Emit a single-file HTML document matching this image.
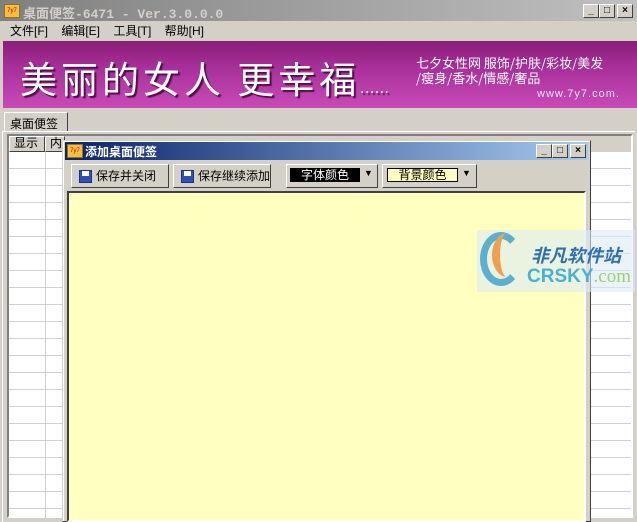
<!DOCTYPE html>
<html><head><meta charset="utf-8"><style>
*{margin:0;padding:0;box-sizing:border-box}
body{width:637px;height:522px;overflow:hidden;background:#d4d0c8;font-family:"Liberation Sans","Noto Sans CJK SC",sans-serif;font-size:12px;position:relative}
.a{position:absolute}
.btn{position:absolute;width:16px;height:14px;background:#d4d0c8;border:1px solid;border-color:#fff #404040 #404040 #fff;font-size:10px;line-height:11px;text-align:center;font-weight:bold;color:#000}
.ico{position:absolute;width:16px;height:14px;background:#f0c040;border:1px solid #a07010;font-size:6px;color:#c00;text-align:center;line-height:12px}
.tb{position:absolute;top:164px;height:24px;border:1px solid;border-color:#fff #404040 #404040 #fff;background:#d4d0c8;font-size:12px;line-height:22px;padding-left:24px}
.fl{position:absolute;left:7px;top:5px;width:13px;height:13px;background:#3050b0;border:1px solid #203080}
.fl:after{content:"";position:absolute;left:2px;top:0;width:7px;height:5px;background:#fff}
</style></head><body>
<div class="a" style="left:0;top:0;width:637px;height:21px;background:linear-gradient(90deg,#808080,#c0c0c0)"></div>
<div class="ico" style="left:4px;top:4px">7y7</div>
<div class="a" style="left:23px;top:3px;color:#d4d0c8;font-family:'Liberation Mono','Noto Sans CJK SC',monospace;font-weight:bold;font-size:13px">桌面便签-6471 - Ver.3.0.0.0</div>
<div class="btn" style="left:583px;top:4px">_</div>
<div class="btn" style="left:599px;top:4px">□</div>
<div class="btn" style="left:617px;top:4px">×</div>
<div class="a" style="left:10px;top:22px;font-size:12px;word-spacing:10px">文件[F] 编辑[E] 工具[T] 帮助[H]</div>
<div class="a" style="left:3px;top:41px;width:634px;height:67px;background:linear-gradient(180deg,#8a1e78 0%,#a8309a 40%,#c84ab8 100%)"></div>
<div class="a" style="left:20px;top:53px;color:#fff;font-size:37px;font-family:'Noto Sans CJK SC',sans-serif;letter-spacing:4px;text-shadow:2px 2px 1px #501048;line-height:48px">美丽的女人 更幸福<span style="font-size:14px;letter-spacing:1px">......</span></div>
<div class="a" style="left:416px;top:55px;color:#fff;font-size:13px;line-height:15px;font-family:'Noto Sans CJK SC',sans-serif">七夕女性网 服饰/护肤/彩妆/美发<br>/瘦身/香水/情感/奢品</div>
<div class="a" style="left:537px;top:88px;color:#f0e0f0;font-size:11px;letter-spacing:1px">www.7y7.com.</div>
<div class="a" style="left:4px;top:112px;width:64px;height:20px;border:1px solid;border-color:#fff #404040 transparent #fff;padding:2px 0 0 5px">桌面便签</div>
<div class="a" style="left:2px;top:131px;width:633px;height:391px;border-top:1px solid #fff;border-left:1px solid #fff"></div>
<div class="a" style="left:7px;top:134px;width:626px;height:384px;border:2px solid;border-color:#808080 #fff #fff #808080;background:#fff;
background-image:repeating-linear-gradient(180deg,transparent 0 16px,#d0d0d0 16px 17px);background-position:0 16px"></div>
<div class="a" style="left:9px;top:136px;width:622px;height:16px;background:#d4d0c8"></div>
<div class="a" style="left:9px;top:136px;width:36px;height:16px;border:1px solid;border-color:#fff #404040 #404040 #fff;padding-left:4px;line-height:13px">显示</div>
<div class="a" style="left:45px;top:136px;width:20px;height:16px;border:1px solid;border-color:#fff #404040 #404040 #fff;padding-left:4px;line-height:13px">内</div>
<div class="a" style="left:45px;top:152px;width:1px;height:366px;background:#d0d0d0"></div>
<div class="a" style="left:62px;top:140px;width:529px;height:382px;background:#d4d0c8;border:1px solid;border-color:#d4d0c8 #404040 #404040 #d4d0c8;box-shadow:inset 1px 1px #fff"></div>
<div class="a" style="left:65px;top:142px;width:523px;height:18px;background:linear-gradient(90deg,#0a246a,#a6caf0)"></div>
<div class="ico" style="left:67px;top:144px">7y7</div>
<div class="a" style="left:85px;top:143px;color:#fff;font-weight:bold;font-size:12px">添加桌面便签</div>
<div class="btn" style="left:536px;top:144px">_</div>
<div class="btn" style="left:552px;top:144px">□</div>
<div class="btn" style="left:570px;top:144px">×</div>
<div class="tb" style="left:71px;width:98px"><div class="fl"></div>保存并关闭</div>
<div class="tb" style="left:173px;width:98px"><div class="fl"></div>保存继续添加</div>
<div class="a" style="left:286px;top:164px;width:92px;height:24px;border:1px solid;border-color:#fff #404040 #404040 #fff"></div>
<div class="a" style="left:290px;top:168px;width:70px;height:14px;background:#000;color:#fff;text-align:center;line-height:14px">字体颜色</div>
<div class="a" style="left:364px;top:168px;font-size:9px">▼</div>
<div class="a" style="left:382px;top:164px;width:95px;height:24px;border:1px solid;border-color:#fff #404040 #404040 #fff"></div>
<div class="a" style="left:387px;top:168px;width:71px;height:14px;background:#ffffc0;border:1px solid #000;text-align:center;line-height:12px">背景颜色</div>
<div class="a" style="left:462px;top:168px;font-size:9px">▼</div>
<div class="a" style="left:67px;top:191px;width:519px;height:331px;background:#ffffc0;border:2px solid;border-color:#404040 #fff #fff #404040"></div>
<div class="a" style="left:477px;top:230px;width:158px;height:62px;background:rgba(220,235,245,.6)"></div>
<div class="a" style="left:480px;top:232px;width:42px;height:54px;border-radius:50%;border:7px solid #5bb0d0;border-right-color:transparent"></div>
<div class="a" style="left:492px;top:233px;width:30px;height:44px;border-radius:50%;border-left:8px solid #f0a050"></div>
<div class="a" style="left:531px;top:244px;color:#3070b0;font-weight:bold;font-style:italic;font-size:18px;font-family:'Noto Sans CJK SC',sans-serif;line-height:22px">非凡软件站</div>
<div class="a" style="left:527px;top:266px;color:#4ab0d8;font-weight:bold;font-size:19px;line-height:22px">CRSKY<span style="color:#9cd070;font-weight:normal;font-family:'Liberation Serif',serif">.com</span></div>
</body></html>
